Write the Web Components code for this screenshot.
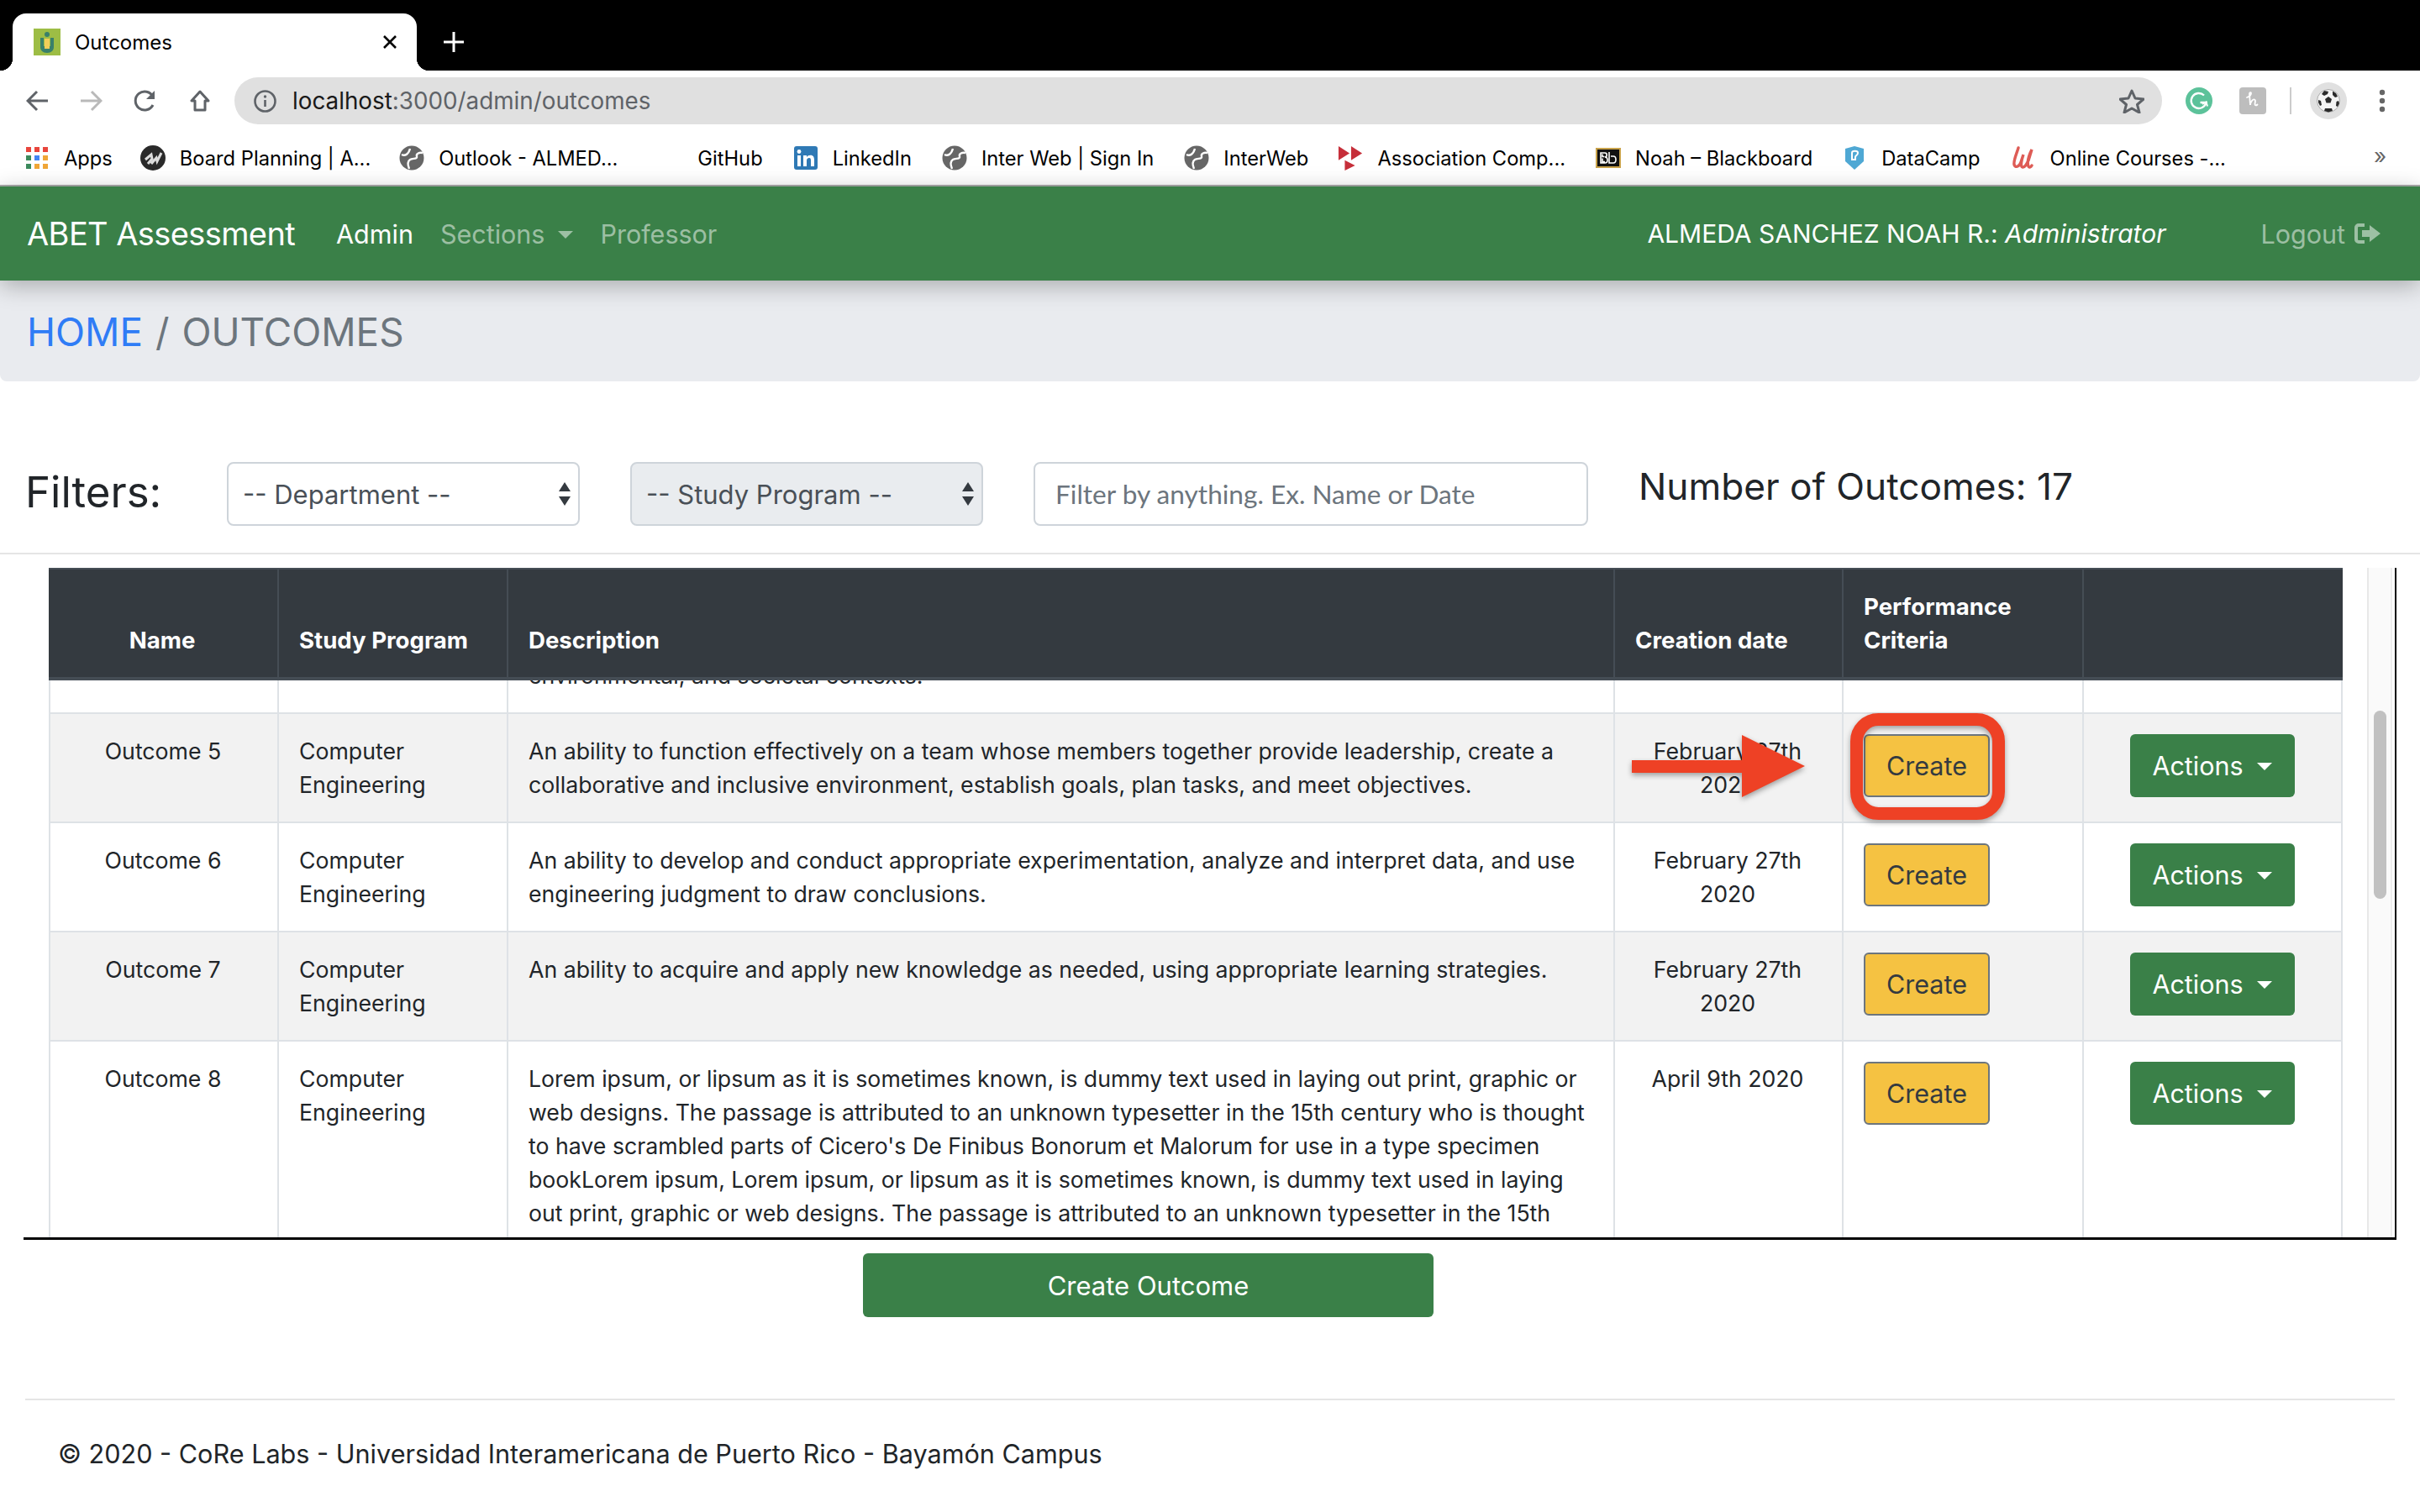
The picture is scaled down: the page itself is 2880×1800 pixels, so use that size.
<!DOCTYPE html>
<html lang="en">
<head>
<meta charset="utf-8">
<title>Outcomes</title>
<style>
  html, body { margin: 0; padding: 0; background: #fff; }
  body { width: 2880px; height: 1800px; overflow: hidden; font-family: Inter, "Liberation Sans", sans-serif; color: #212529; }
</style>
</head>
<body>
<browser-chrome></browser-chrome>
<app-navbar></app-navbar>
<app-breadcrumb></app-breadcrumb>
<filter-bar></filter-bar>
<outcomes-table></outcomes-table>
<create-bar></create-bar>
<app-footer>&copy; 2020 - CoRe Labs - Universidad Interamericana de Puerto Rico - Bayamón Campus</app-footer>

<script>
const GLOBE = `<svg width="30" height="30" viewBox="0 0 30 30" style="display:block"><circle cx="15" cy="15" r="14.500" fill="#666"/><path d="M3 11c4 2 8 0 10-7" fill="none" stroke="#fff" stroke-width="2.400"/><path d="M28 9c-4-1-8 1-7 4 1 4-5 2-8 4s-3 6-1 11" fill="none" stroke="#fff" stroke-width="2.400"/></svg>`

const define = (name, html, setup) => {
  customElements.define(name, class extends HTMLElement {
    constructor() {
      super()
      this.attachShadow({ mode: 'open' }).innerHTML = html
    }
    connectedCallback() {
      if (setup) setup(this.shadowRoot)
    }
  })
}

define('chrome-bookmark', `
  <style>
    :host { display: flex; align-items: center; gap: 17px; margin-right: 36px; font-size: 23.7px; color: #000; white-space: nowrap; }
    .icon { width: 30px; height: 30px; display: flex; align-items: center; justify-content: center; }
  </style>
  <span class="icon"><slot name="icon"></slot></span><span><slot></slot></span>
`)

define('browser-chrome', `
  <style>
    :host { display: block; height: 222px; font-family: Inter, "Liberation Sans", sans-serif; }
    .strip { height: 84px; background: #000; padding-left: 15px; box-sizing: border-box; display: flex; align-items: flex-end; gap: 31px; }
    .tab { position: relative; width: 481px; height: 68px; background: #fff; border-radius: 16px 16px 0 0; display: flex; align-items: center; padding: 0 24px 0 25px; box-sizing: border-box; font-size: 24px; color: #000; }
    .tab::before, .tab::after { content: ""; position: absolute; bottom: 0; width: 15px; height: 15px; }
    .tab::before { left: -15px; background: radial-gradient(circle at 0 0, #000 15px, #fff 15.500px); }
    .tab::after { right: -15px; background: radial-gradient(circle at 100% 0, #000 15px, #fff 15.500px); }
    .tab .title { margin-left: 17px; flex: 1; }
    .plus { margin-bottom: 21px; display: flex; }
    .tools { height: 76px; display: flex; align-items: center; padding: 0 0 4px 31px; box-sizing: border-box; }
    .tools svg { display: block; flex: none; }
    .nav { display: flex; gap: 37px; margin-right: 27px; }
    .url { width: 2294px; height: 56px; background: #e0e0e0; border-radius: 28px; display: flex; align-items: center; padding: 0 21px 0 23px; box-sizing: border-box; font-size: 27.8px; color: #5f6368; }
    .url .text { margin-left: 19px; flex: 1; }
    .url b { font-weight: 400; color: #1a1a1a; }
    .ext { display: flex; align-items: center; margin-left: 28px; }
    .sep { width: 2px; height: 32px; background: #ccc; margin: 0 22px 0 28px; }
    .avatar { width: 44px; height: 44px; border-radius: 50%; background: #e0e0e0; display: flex; align-items: center; justify-content: center; }
    .dots { margin-left: 38px; }
    .marks { height: 62px; box-sizing: border-box; border-bottom: 2px solid #aaa; display: flex; align-items: center; padding: 0 0 4px 29px; position: relative; }
    .more { position: absolute; left: 2825px; top: 10px; font-size: 26px; color: #666; }
  </style>
  <div class="strip">
    <div class="tab">
      <svg width="32" height="32" viewBox="0 0 32 32"><rect width="32" height="32" fill="#9dbd45"/><path d="M8 11h4v10h8V11h4v11c0 4-3 7-8 7s-8-3-8-7z" fill="#39806a"/><rect x="13" y="12" width="6" height="12" fill="#f0cd5a"/><circle cx="16" cy="7" r="3" fill="#39806a"/></svg>
      <span class="title">Outcomes</span>
      <svg width="16" height="16" viewBox="0 0 16 16"><path d="M1 1l14 14M15 1L1 15" stroke="#000" stroke-width="2.600"/></svg>
    </div>
    <svg class="plus" width="26" height="26" viewBox="0 0 26 26"><path d="M13 1v24M1 13h24" stroke="#fff" stroke-width="3"/></svg>
  </div>
  <div class="tools">
    <div class="nav">
      <svg width="27" height="26" viewBox="0 0 27 26"><path d="M26 13H3M13 2L2 13l11 11" fill="none" stroke="#5f6368" stroke-width="3"/></svg>
      <svg width="27" height="26" viewBox="0 0 27 26"><path d="M1 13h23M14 2l11 11-11 11" fill="none" stroke="#b9b9b9" stroke-width="3"/></svg>
      <svg width="28" height="26" viewBox="0 0 28 26"><path d="M23 18a11 11 0 1 1 0-10" fill="none" stroke="#5f6368" stroke-width="3"/><path d="M25 1v10H15z" fill="#5f6368"/></svg>
      <svg width="28" height="26" viewBox="0 0 28 26"><path d="M14 2L4 13h4v11h12V13h4z" fill="none" stroke="#5f6368" stroke-width="3" stroke-linejoin="round"/></svg>
    </div>
    <div class="url">
      <svg width="27" height="27" viewBox="0 0 27 27"><circle cx="13.500" cy="13.500" r="12" fill="none" stroke="#5f6368" stroke-width="2.600"/><path d="M13.500 12v8" stroke="#5f6368" stroke-width="2.600"/><circle cx="13.500" cy="8" r="1.700" fill="#5f6368"/></svg>
      <span class="text"><b>localhost</b>:3000/admin/outcomes</span>
      <svg width="30" height="29" viewBox="0 0 30 29"><path d="M15 2l4 9 10 1-7.500 6.500L24 28l-9-5-9 5 2.500-9.500L1 12l10-1z" fill="none" stroke="#5f6368" stroke-width="3" stroke-linejoin="round"/></svg>
    </div>
    <div class="ext">
      <svg width="32" height="32" viewBox="0 0 32 32"><circle cx="16" cy="16" r="16" fill="#5cc29a"/><path d="M22 9.500a9 9 0 1 0 2.500 8.500h-7" fill="none" stroke="#fff" stroke-width="2.400"/><path d="M20 20l4.500-2.500 1.500 5" fill="none" stroke="#fff" stroke-width="2"/></svg>
      <svg style="margin-left:32px" width="32" height="32" viewBox="0 0 32 32"><rect width="32" height="32" rx="4" fill="#bdbdbd"/><path d="M9 12c3-1 5-3 5-5 0-1.500-2-1-2 1l1 13c.5-4 3-7 5-6.500s.5 4 .5 5.500 1.500 2 3 .5" fill="none" stroke="#fff" stroke-width="1.800" stroke-linecap="round"/></svg>
    </div>
    <span class="sep"></span>
    <span class="avatar">
      <svg width="28" height="28" viewBox="0 0 28 28"><circle cx="14" cy="14" r="13.500" fill="#f4f4f4" stroke="#aaa"/><path d="M10 12l4-3 4 3-1.500 4.500h-5zM9 2l5 1-1 3-4 2-3-2zM19 2.500l4 2.500 2 4-3 1-3-3zM2 13l3 1 1 5-2 1-2-4zM26 14l1 3-2 4-2-1 .5-5zM10 23h8l1 3-5 1.500L9 26z" fill="#2b2b2b"/></svg>
    </span>
    <svg class="dots" width="8" height="28" viewBox="0 0 8 28"><circle cx="4" cy="4" r="3.200" fill="#666"/><circle cx="4" cy="14" r="3.200" fill="#666"/><circle cx="4" cy="24" r="3.200" fill="#666"/></svg>
  </div>
  <div class="marks">
    <chrome-bookmark style="margin-right:33px">
      <svg slot="icon" width="28" height="28" viewBox="0 0 28 28"><g fill="#e8453c"><rect x="1" y="1" width="6" height="6"/><rect x="11" y="1" width="6" height="6"/><rect x="21" y="1" width="6" height="6"/></g><rect x="1" y="11" width="6" height="6" fill="#3c8a5c"/><rect x="11" y="11" width="6" height="6" fill="#4285f4"/><rect x="21" y="11" width="6" height="6" fill="#f0a637"/><rect x="1" y="21" width="6" height="6" fill="#3c8a5c"/><rect x="11" y="21" width="6" height="6" fill="#f0a637"/><rect x="21" y="21" width="6" height="6" fill="#f0a637"/></svg>Apps</chrome-bookmark>
    <chrome-bookmark style="margin-right:34px">
      <svg slot="icon" width="30" height="30" viewBox="0 0 30 30"><circle cx="15" cy="15" r="15" fill="#2a2a2a"/><path d="M6 17l7-6 1 5-5 6M13 22l6-7 1 4 5-10" fill="none" stroke="#ddd" stroke-width="3" style="filter:blur(.6px)"/></svg>Board Planning | A...</chrome-bookmark>
    <chrome-bookmark style="margin-right:48px"><span slot="icon">${GLOBE}</span>Outlook - ALMED...</chrome-bookmark>
    <chrome-bookmark><span slot="icon"></span>GitHub</chrome-bookmark>
    <chrome-bookmark>
      <svg slot="icon" width="28" height="28" viewBox="0 0 28 28"><rect width="28" height="28" rx="3" fill="#2f79b5"/><rect x="4" y="11" width="4" height="13" fill="#fff"/><circle cx="6" cy="6.500" r="2.400" fill="#fff"/><path d="M11 11h4v2c1-1.500 2.500-2.300 4.500-2.300 3.500 0 4.500 2.300 4.500 5.800V24h-4v-7c0-1.800-.5-3-2-3s-3 1.200-3 3v7h-4z" fill="#fff"/></svg>LinkedIn</chrome-bookmark>
    <chrome-bookmark><span slot="icon">${GLOBE}</span>Inter Web | Sign In</chrome-bookmark>
    <chrome-bookmark style="margin-right:35px"><span slot="icon">${GLOBE}</span>InterWeb</chrome-bookmark>
    <chrome-bookmark>
      <svg slot="icon" width="32" height="32" viewBox="0 0 32 32"><path d="M1 1l14 9-14 9zM17 1l14 9-14 9zM9 19l13 6.500L9 32z" fill="#c62f3a"/></svg>Association Comp...</chrome-bookmark>
    <chrome-bookmark style="margin-right:35px">
      <svg slot="icon" width="30" height="24" viewBox="0 0 30 24"><rect x="1" y="1" width="28" height="22" fill="#111" stroke="#c9a24a" stroke-width="2"/><path d="M6 6h5c3 0 3 5 0 5 4 0 4 7 0 7H6zM8 7.500v3h2.500M8 12.500v4h3M16 5v13h5c4 0 4-8 0-8h-3" fill="none" stroke="#fff" stroke-width="1.600"/></svg>Noah – Blackboard</chrome-bookmark>
    <chrome-bookmark>
      <svg slot="icon" width="24" height="30" viewBox="0 0 24 30"><path d="M1 4l11-3 11 3v15l-11 10L1 19z" fill="#4fa8d4"/><path d="M9 17v-8c0-3 7-3 7 0 0 3-3 3-3 5v3z" fill="none" stroke="#fff" stroke-width="2"/></svg>DataCamp</chrome-bookmark>
    <chrome-bookmark>
      <svg slot="icon" width="28" height="28" viewBox="0 0 28 28"><path d="M8 2C6 9 2 17 3 22c1 4 6 3 8-3l3-9c-2 6-4 14-1 15 3 .5 5-4 7-8l4-13c-3 6-6 15-4 20 1 2 3 1 4-1" fill="none" stroke="#de5c56" stroke-width="3.400" stroke-linecap="round"/></svg>Online Courses -...</chrome-bookmark>
    <span class="more">»</span>
  </div>
`)

define('app-navbar', `
  <style>
    :host { display: flex; align-items: center; height: 112px; background: #3a8048; padding: 0 46px 0 32px; box-sizing: border-box; color: #fff; font-size: 30.5px; position: relative; box-shadow: 0 6px 26px rgba(0,0,0,.28); }
    .brand { font-size: 38px; letter-spacing: -.6px; margin-right: 49px; }
    .dim { color: rgba(255,255,255,.5); }
    .link { margin-right: 32px; }
    .caret { display: inline-block; border-top: 9px solid rgba(255,255,255,.5); border-left: 9px solid transparent; border-right: 9px solid transparent; margin-left: 16px; vertical-align: 6px; }
    .user { margin-left: auto; font-size: 30px; }
    .user em { font-style: italic; }
    .logout { margin-left: 113px; display: flex; align-items: center; gap: 11px; }
  </style>
  <span class="brand">ABET Assessment</span>
  <span class="link">Admin</span>
  <span class="link dim">Sections<i class="caret"></i></span>
  <span class="link dim">Professor</span>
  <span class="user">ALMEDA SANCHEZ NOAH R.: <em>Administrator</em></span>
  <span class="logout dim">Logout
    <svg width="32" height="26" viewBox="0 0 32 26"><path d="M12 3H5a3 3 0 0 0-3 3v14a3 3 0 0 0 3 3h7" fill="none" stroke="rgba(255,255,255,.5)" stroke-width="4"/><path d="M18 3l13 10-13 10v-6H9V9h9z" fill="rgba(255,255,255,.5)"/></svg>
  </span>
`)

define('app-breadcrumb', `
  <style>
    :host { display: block; height: 120px; background: #e9ebef; border-radius: 0 0 8px 8px; padding: 30px 32px 0; box-sizing: border-box; font-size: 45.8px; line-height: 64px; color: #6c757d; }
    a { color: #2f7cf6; text-decoration: none; }
    span { margin: 0 15px; }
  </style>
  <a href="#">HOME</a><span>/</span>OUTCOMES
`)

define('filter-bar', `
  <style>
    :host { display: flex; align-items: center; height: 206px; box-sizing: border-box; padding: 96px 0 32px 30px; border-bottom: 2px solid #e5e5e5; }
    h2 { margin: -6px 0 0; font-size: 51px; font-weight: 400; width: 240px; color: #212529; }
    .field { height: 76px; box-sizing: border-box; border: 2px solid #ced4da; border-radius: 8px; display: flex; align-items: center; font-size: 31px; color: #495057; }
    .select { width: 420px; padding: 0 9px 0 17px; justify-content: space-between; margin-right: 60px; }
    .select.off { background: #e9ecef; }
    .input { width: 660px; padding-left: 24px; color: #6c757d; font-family: Lato, sans-serif; font-size: 31.6px; }
    .count { margin: -18px 0 0 60px; font-size: 44.2px; color: #212529; }
  </style>
  <h2>Filters:</h2>
  <div class="field select">-- Department --
    <svg width="14" height="28" viewBox="0 0 14 28"><path d="M7 0l7 11H0zM7 28l7-11H0z" fill="#343a40"/></svg>
  </div>
  <div class="field select off">-- Study Program --
    <svg width="14" height="28" viewBox="0 0 14 28"><path d="M7 0l7 11H0zM7 28l7-11H0z" fill="#343a40"/></svg>
  </div>
  <div class="field input">Filter by anything. Ex. Name or Date</div>
  <span class="count">Number of Outcomes: 17</span>
`)

const LOREM = "Lorem ipsum, or lipsum as it is sometimes known, is dummy text used in laying out print, graphic or web designs. The passage is attributed to an unknown typesetter in the 15th"
const rows = [
  ['Outcome 5', 'An ability to function effectively on a team whose members together provide leadership, create a collaborative and inclusive environment, establish goals, plan tasks, and meet objectives.', 'February 27th 2020'],
  ['Outcome 6', 'An ability to develop and conduct appropriate experimentation, analyze and interpret data, and use engineering judgment to draw conclusions.', 'February 27th 2020'],
  ['Outcome 7', 'An ability to acquire and apply new knowledge as needed, using appropriate learning strategies.', 'February 27th 2020'],
  ['Outcome 8', LOREM + " century who is thought to have scrambled parts of Cicero's De Finibus Bonorum et Malorum for use in a type specimen bookLorem ipsum, " + LOREM, 'April 9th 2020']
]

define('outcomes-table', `
  <style>
    :host { display: block; position: relative; margin: 16px 0 0 28px; width: 2824px; height: 800px; box-sizing: border-box; border-right: 2px solid #000; border-bottom: 3px solid #000; font-size: 26.7px; line-height: 40px; color: #212529; }
    .body { display: flex; height: 100%; }
    .scroll { width: 2760px; height: 100%; padding-left: 30px; box-sizing: border-box; overflow: hidden; flex: none; }
    table { width: 2730px; table-layout: fixed; border-collapse: separate; border-spacing: 0; }
    th { position: sticky; top: 0; z-index: 1; background: #343a40; color: #fff; text-align: left; vertical-align: bottom; font-weight: 700; font-size: 27.6px; padding: 24px 26px 24px 24px; border-top: 2px solid #454d55; border-right: 2px solid #454d55; border-bottom: 4px solid #454d55; }
    th:last-child { border-right: 0; }
    td { padding: 24px 26px 24px 24px; vertical-align: top; border-top: 2px solid #dee2e6; border-right: 2px solid #dee2e6; }
    td:first-child { border-left: 2px solid #dee2e6; }
    td:last-child { padding: 24px 26px 24px 25px; }
    tr.odd td { background: #f2f2f2; }
    .c { text-align: center; }
    button { display: inline-block; height: 75px; box-sizing: border-box; font: inherit; font-size: 30.5px; border-radius: 6px; cursor: pointer; vertical-align: top; }
    .create { width: 150px; background: #f5c242; color: #343a40; border: 2px solid #6c757d; padding: 0; }
    .actions { width: 196px; background: #3a8048; color: #fff; border: 0; padding: 0; }
    .actions i { display: inline-block; border-top: 9px solid #fff; border-left: 9px solid transparent; border-right: 9px solid transparent; margin-left: 16px; vertical-align: 6px; }
    .track { width: 30px; height: 100%; margin-left: 29px; box-sizing: border-box; background: #fafafa; border-left: 2px solid #e8e8e8; border-right: 2px solid #ededed; position: relative; flex: none; }
    .thumb { position: absolute; left: 6px; top: 170px; width: 15px; height: 224px; border-radius: 8px; background: #c1c1c1; }
    svg.mark { position: absolute; left: 0; top: 0; z-index: 2; pointer-events: none; overflow: visible; }
  </style>
  <div class="body">
    <div class="scroll">
      <table>
        <colgroup><col style="width:274px"><col style="width:273px"><col style="width:1317px"><col style="width:272px"><col style="width:286px"><col style="width:308px"></colgroup>
        <thead><tr><th class="c">Name</th><th>Study Program</th><th>Description</th><th>Creation date</th><th>Performance Criteria</th><th></th></tr></thead>
        <tbody></tbody>
      </table>
    </div>
    <div class="track"><div class="thumb"></div></div>
  </div>
  <svg class="mark" width="2824" height="800" viewBox="28 676 2824 800" style="filter:drop-shadow(0 3px 3px rgba(0,0,0,.35))">
    <rect x="2209.500" y="856.500" width="169" height="112" rx="26" fill="none" stroke="#ee4125" stroke-width="15"/>
    <path d="M1942 905h131v-30l75 37-75 37v-29h-131z" fill="#ee4125"/>
  </svg>
`, root => {
  const body = root.querySelector('tbody')
  if (!body.children.length) {
    // the row above Outcome 5 is scrolled almost out of view, only its last line still shows
    body.innerHTML = `<tr><td></td><td></td><td>environmental, and societal contexts.</td><td></td><td></td><td></td></tr>` +
      rows.map((r, i) => `
      <tr class="${i % 2 ? '' : 'odd'}">
        <td class="c">${r[0]}</td>
        <td>Computer Engineering</td>
        <td>${r[1]}</td>
        <td class="c">${r[2]}</td>
        <td><button class="create">Create</button></td>
        <td class="c"><button class="actions">Actions<i></i></button></td>
      </tr>`).join('')
  }
  const scroll = root.querySelector('.scroll')
  // the reference is scrolled so the Outcome 5 row starts 172px below the table top
  scroll.scrollTop = body.children[1].offsetTop - 172
})

define('create-bar', `
  <style>
    :host { display: block; padding: 16px 0 0 1027px; }
    button { display: block; width: 679px; height: 76px; border: 0; border-radius: 6px; background: #3a8048; color: #fff; font: 31px Inter, sans-serif; }
  </style>
  <button>Create Outcome</button>
`)

define('app-footer', `
  <style>
    :host { display: block; margin: 97px 30px 0; border-top: 2px solid #e5e5e5; padding: 44px 0 0 39px; font-size: 30.6px; line-height: 40px; color: #212529; }
  </style>
  <slot></slot>
`)
</script>
</body>
</html>
